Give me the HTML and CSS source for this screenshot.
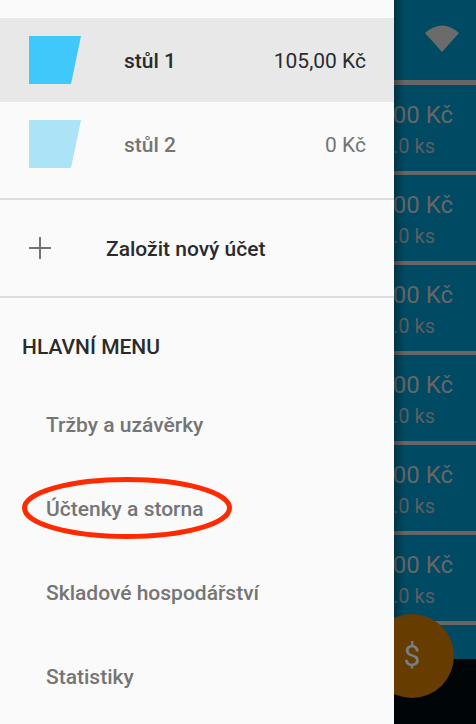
FILE: index.html
```html
<!DOCTYPE html>
<html lang="cs">
    <head>
        <meta charset="utf-8">
        <title>Účty a hlavní menu</title>
        <link rel="stylesheet" href="styles.css">
    </head>
    <body>
        <div class="app">
            <nav class="drawer">
                <div class="accounts">
                    <div class="account selected">
                        <svg class="table-icon" width="52" height="48" viewBox="0 0 52 48"><polygon points="0,0 52,0 42,48 0,48" fill="#40c8fa"/></svg>
                        <span class="account-name">stůl 1</span>
                        <span class="account-sum">105,00 Kč</span>
                    </div>
                    <div class="account">
                        <svg class="table-icon" width="52" height="48" viewBox="0 0 52 48"><polygon points="0,0 52,0 42,48 0,48" fill="#ade3f6"/></svg>
                        <span class="account-name">stůl 2</span>
                        <span class="account-sum">0 Kč</span>
                    </div>
                </div>

                <div class="new-account">
                    <svg class="plus" width="22" height="22" viewBox="0 0 22 22"><path d="M11 0V22M0 11H22" stroke="#757575" stroke-width="2" fill="none"/></svg>
                    <span>Založit nový účet</span>
                </div>

                <h2 class="menu-title">HLAVNÍ MENU</h2>
                <ul class="menu">
                    <li>Tržby a uzávěrky</li>
                    <li class="circled">
                        Účtenky a storna
                        <svg class="ring" width="214" height="66" viewBox="0 0 214 66"><ellipse cx="107" cy="33" rx="102.5" ry="28.5" fill="none" stroke="#ff2a00" stroke-width="5"/></svg>
                    </li>
                    <li>Skladové hospodářství</li>
                    <li>Statistiky</li>
                </ul>
            </nav>

            <main class="behind">
                <div class="top-bar">
                    <svg width="34" height="28" viewBox="0 0 34 28"><path d="M0 9Q17 -6 34 9L17 28Z" fill="#6b6b6b"/></svg>
                </div>
                <div class="item"><div><p class="price">0,00 Kč</p><p class="qty">1.0 ks</p></div></div>
                <div class="item"><div><p class="price">0,00 Kč</p><p class="qty">1.0 ks</p></div></div>
                <div class="item"><div><p class="price">0,00 Kč</p><p class="qty">1.0 ks</p></div></div>
                <div class="item"><div><p class="price">0,00 Kč</p><p class="qty">1.0 ks</p></div></div>
                <div class="item"><div><p class="price">0,00 Kč</p><p class="qty">1.0 ks</p></div></div>
                <div class="item"><div><p class="price">0,00 Kč</p><p class="qty">1.0 ks</p></div></div>
                <div class="bottom-bar"></div>
                <div class="fab">$</div>
            </main>
        </div>
    </body>
</html>
```

FILE: styles.css
```css
html, body {
    margin: 0;
    padding: 0;
}
body {
    font-family: Roboto, "Liberation Sans", sans-serif;
    background: #004a63;
}
p, h2, ul {
    margin: 0;
    padding: 0;
}
.app {
    display: flex;
    width: 476px;
    height: 724px;
    overflow: hidden;
}

/* drawer */
.drawer {
    width: 394px;
    flex: none;
    background: #fafafa;
    padding-top: 18px;
    box-sizing: border-box;
}
.accounts {
    height: 180px;
    border-bottom: 2px solid #dddddd;
}
.account {
    display: flex;
    align-items: center;
    height: 84px;
    padding: 0 28px 0 29px;
    font-size: 21px;
    color: #757575;
}
.account.selected {
    background: #e8e8e8;
    color: #2b2b2b;
}
.table-icon {
    flex: none;
}
.account-name {
    margin-left: 43px;
    padding-top: 2px;
    font-weight: 500;
}
.account-sum {
    margin-left: auto;
    padding-top: 2px;
}
.new-account {
    display: flex;
    align-items: center;
    height: 96px;
    padding-left: 29px;
    border-bottom: 2px solid #dddddd;
    font-size: 21px;
    font-weight: 500;
    color: #2b2b2b;
}
.new-account span {
    margin-left: 55px;
    padding-top: 2px;
}
.menu-title {
    padding: 37px 0 0 22px;
    font-size: 21px;
    line-height: 24px;
    font-weight: 500;
    color: #2b2b2b;
}
.menu {
    list-style: none;
    padding-top: 24px;
}
.menu li {
    position: relative;
    height: 84px;
    line-height: 84px;
    padding-left: 46px;
    font-size: 21px;
    font-weight: 500;
    color: #757575;
}
.ring {
    position: absolute;
    left: 20px;
    top: 8px;
}

/* dimmed screen behind the drawer */
.behind {
    position: relative;
    flex: 1;
    overflow: hidden;
    background: #004a63;
}
.behind::before {
    content: "";
    position: absolute;
    left: 0;
    top: 0;
    bottom: 0;
    width: 11px;
    background: linear-gradient(to right, rgba(0, 0, 0, 0.3), rgba(0, 0, 0, 0));
}
.top-bar {
    display: flex;
    justify-content: flex-end;
    padding: 24px 17px 0 0;
    box-sizing: border-box;
    border-bottom: 5px solid #666666;
    height: 85px;
}
.item {
    display: flex;
    justify-content: flex-end;
    height: 90px;
    box-sizing: border-box;
    padding: 16px 23px 0 0;
    border-bottom: 4px solid #666666;
    white-space: nowrap;
}
.price {
    font-size: 24px;
    line-height: 28px;
    color: #666666;
}
.qty {
    font-size: 20px;
    line-height: 24px;
    margin-top: 5px;
    padding-right: 18px;
    text-align: right;
    color: #5a5f62;
}
.bottom-bar {
    position: absolute;
    left: 0;
    right: 0;
    top: 659px;
    bottom: 0;
    background: #000508;
}
.fab {
    position: absolute;
    left: -24px;
    top: 614px;
    width: 84px;
    height: 84px;
    border-radius: 50%;
    background: #663c00;
    color: #77808a;
    font-size: 30px;
    line-height: 84px;
    text-align: center;
}
```
